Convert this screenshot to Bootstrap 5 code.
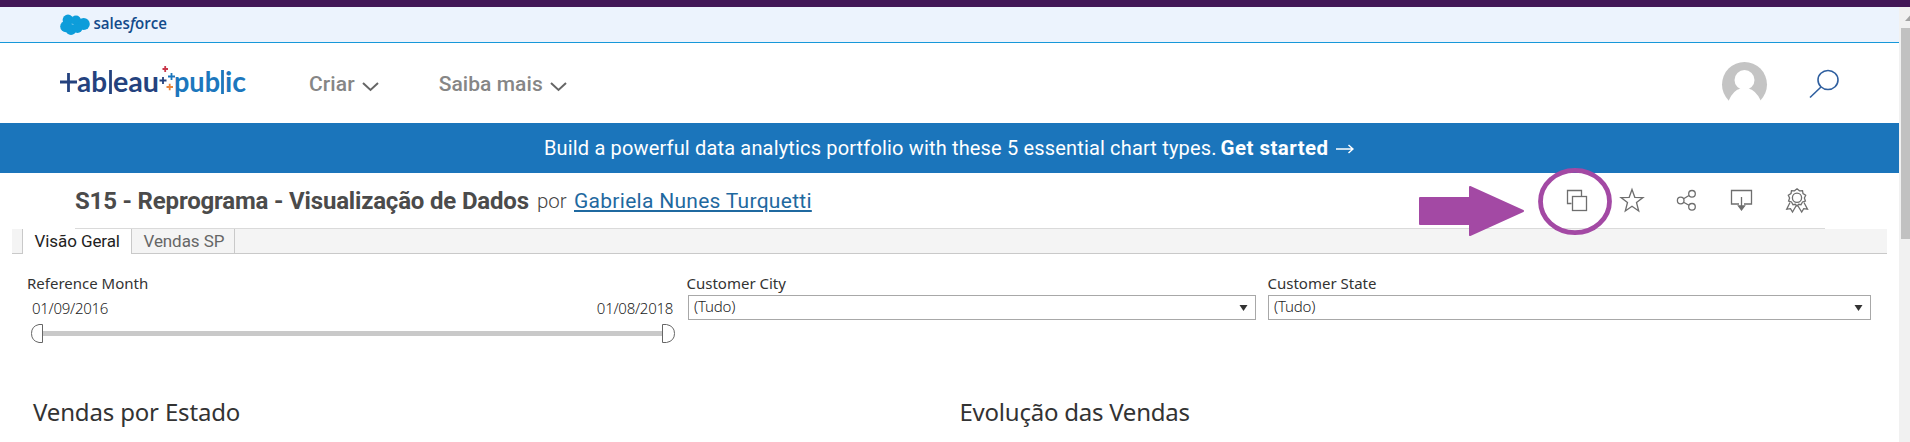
<!DOCTYPE html>
<html lang="pt">
<head>
<meta charset="utf-8">
<title>Tableau Public</title>
<link href="https://cdn.jsdelivr.net/npm/bootstrap@5.3.0/dist/css/bootstrap.min.css" rel="stylesheet">
<style>
body{height:442px;overflow:hidden;background:#fff;color:#333;font-family:"Noto Sans",sans-serif}
.benton{font-family:Roboto,"Liberation Sans",sans-serif}
.shell{height:442px}
.top-strip{height:7px;background:#421757}
.page-body{width:1899px}
.sf-bar{height:36px;background:#ecf3fd;border-bottom:1px solid #1798d9;padding-left:60px}
.site-head{height:80px;padding-left:60px}
.main-nav{margin-left:58px;padding-top:2px}
.main-nav svg{margin-left:6px;margin-top:5px}
.menu-item{color:#868686;font-size:21px;font-weight:500;line-height:30px;text-decoration:none;white-space:nowrap;letter-spacing:.1px}
.menu-item + svg + .menu-item{margin-left:60px;letter-spacing:.05px}
.promo{height:50px;background:#1b75bb;color:#fff;font-size:20px;line-height:51px;padding-left:544px;white-space:nowrap;letter-spacing:.16px}
.promo b{font-size:20.5px;letter-spacing:.45px;margin:0 6px 0 4px}
.title-row{height:55px;margin-left:75px;width:1750px;white-space:nowrap}
.title-row h1{font-size:24px;font-weight:700;color:#4b4b4b;line-height:56px;letter-spacing:-.18px;width:462px}
.by{font-size:20.5px;font-weight:300;line-height:57px;color:#444;width:37px}
.author{font-size:21px;color:#1f69a0;line-height:57px;text-decoration-thickness:2px;text-underline-offset:2px;letter-spacing:.28px}
.author:hover{color:#1f69a0}
.tool-icons{width:280px;height:55px}
.rule{height:1px;width:1750px;margin-left:75px;background:#dadada}
.sheet-tabs{height:25px;width:1875px;margin-left:12px;background:#f4f4f4;font-size:17px;line-height:25px;white-space:nowrap;letter-spacing:-.08px}
.gap-tab,.rest-tab{border-bottom:1px solid #c9c9c9}
.gap-tab{width:11px;border-right:1px solid #c9c9c9}
.tab-on{width:109px;background:#fff;padding-left:11.5px;border-right:1px solid #c9c9c9;color:#222}
.tab-off{width:103px;padding-left:11.5px;border-right:1px solid #c9c9c9;border-bottom:1px solid #c9c9c9;color:#666}
.filters{height:141px;padding-top:18px;padding-left:27px;white-space:nowrap}
.flabel{font-size:15px;line-height:23px;color:#333}
.range-filter{width:660px;padding-right:12px}
.dates{font-size:15px;font-weight:300;line-height:26px;color:#222;letter-spacing:-.28px;padding-left:5px;padding-right:2px}
.range{margin-left:4px;margin-top:3px}
.range-track{height:5px;background:#c9c9c9;margin-left:-1px}
.pick{height:25px;border:1px solid #a8a8a8;font-size:15px;font-weight:300;line-height:21px;padding-left:5px;padding-right:7px;color:#222;letter-spacing:-.2px}
.city{width:569px;margin-right:12px}
.city .flabel,.state .flabel{margin-left:-.5px}
.city .pick{margin-left:1px}
.state{width:603px}
.sheets{padding-left:33px}
.sheet-title{font-size:24px;line-height:34px;font-weight:400;color:#333;white-space:nowrap;letter-spacing:-.16px;margin:0}
.sheet-title.first{width:926.5px}
.sheet-title.first + .sheet-title{letter-spacing:-.24px}
.axis-ticks{padding-left:107px;height:4px;margin-top:4px}
.axis-ticks span{width:1px;background:#eee;margin-right:942px}
.scroller{width:11px;background:#f1f1f1;padding-left:2px}
.thumb{height:211px;background:#c1c1c1}
.marker{left:1415px;top:165px;pointer-events:none}
</style>
<script src="https://cdn.jsdelivr.net/npm/bootstrap@5.3.0/dist/js/bootstrap.bundle.min.js"></script>
</head>
<body>
<div class="shell position-relative d-flex flex-column">
<div class="top-strip flex-shrink-0"></div>
<div class="d-flex flex-grow-1">
<main class="page-body flex-shrink-0">
<div class="sf-bar">
<svg class="d-block" width="110" height="35" viewBox="60 7 110 35"><g fill="#0d9dda"><circle cx="68" cy="20" r="5.4"/><circle cx="66" cy="26.5" r="5.8"/><circle cx="76" cy="20.5" r="5"/><circle cx="83.700" cy="24" r="6.1"/><circle cx="71" cy="29.500" r="5.4"/><circle cx="77.500" cy="28" r="5"/></g>
<text x="93.5" y="29.3" font-family="Open Sans,sans-serif" font-size="16" font-weight="600" fill="#134a8a" textLength="73.5" lengthAdjust="spacingAndGlyphs">sales<tspan font-style="italic">f</tspan>orce</text></svg>
</div>
<header class="site-head d-flex">
<svg class="flex-shrink-0" width="191" height="80" viewBox="60 43 191 80">
<g font-family="Lato,sans-serif" font-size="28" font-weight="700"><g fill="#24427e"><text x="77" y="91.7" textLength="30" lengthAdjust="spacingAndGlyphs">ab</text><text x="113" y="91.7" textLength="46" lengthAdjust="spacingAndGlyphs">eau</text></g><g fill="#1c77bd"><text x="174" y="91.7" textLength="46" lengthAdjust="spacingAndGlyphs">pub</text><text x="225" y="91.7" textLength="21" lengthAdjust="spacingAndGlyphs">ic</text></g></g>
<g fill="none" stroke-width="2.8"><path d="M60 82H77M68.500 73V92" stroke="#24427e"/><path d="M110.500 70V94" stroke="#24427e"/><path d="M222.500 70V94" stroke="#1c77bd"/></g>
<g fill="none" stroke-width="1.8"><path d="M162.500 69H168M165.200 66V72" stroke="#c9374a"/><path d="M159.500 80.500H166.500M163 77V84" stroke="#24427e"/><path d="M168 76.500H175M171.500 73V80" stroke="#1c77bd"/><path d="M166.500 87H173M169.700 83.700V90.300" stroke="#e8833a"/></g>
</svg>
<nav class="main-nav benton d-flex align-items-center">
<a class="menu-item" href="#">Criar</a>
<svg width="18" height="12" viewBox="0 0 18 12"><path d="M2 2 9.500 9 17 2" fill="none" stroke="#666" stroke-width="2"/></svg>
<a class="menu-item" href="#">Saiba mais</a>
<svg width="18" height="12" viewBox="0 0 18 12"><path d="M2 2 9.500 9 17 2" fill="none" stroke="#666" stroke-width="2"/></svg>
</nav>
<svg class="ms-auto" width="179" height="80" viewBox="1720 43 179 80"><circle cx="1744.500" cy="84.500" r="22.500" fill="#c4c4c4"/><circle cx="1744.500" cy="80" r="10" fill="#fff"/><path d="M1720 101H1728.500Q1733 90 1741 88.500H1748Q1756 90 1761 101H1770V109H1720Z" fill="#fff"/><g fill="none" stroke="#2f5f9f" stroke-width="1.6"><ellipse cx="1828" cy="80" rx="10" ry="9.500"/><path d="M1821 87 1810 97.500"/></g></svg>
</header>
<div class="promo benton d-flex"><span>Build a powerful data analytics portfolio with these 5 essential chart types.</span><b>Get started</b><svg class="align-self-center" width="19" height="12" viewBox="0 0 19 12"><path d="M1 7H18M13.500 3 18 7 13.500 11" fill="none" stroke="#fff" stroke-width="1.5"/></svg></div>
<div class="title-row benton d-flex">
<h1 class="mb-0">S15 - Reprograma - Visualização de Dados</h1><div class="by">por</div><a class="author" href="#">Gabriela Nunes Turquetti</a>
<svg class="tool-icons ms-auto" viewBox="1545 173 280 55"><g fill="none" stroke="#6e6e6e" stroke-width="1.3">
<path d="M1571.500 203.500H1567.500V190.500H1581.500V196.500"/><rect x="1572.500" y="196.500" width="14" height="14"/>
<path d="M1632 189.500 1634.800 197.300 1643 197.500 1636.500 202.500 1638.700 211 1632 206.300 1625.300 211 1627.500 202.500 1621 197.500 1629.200 197.300Z"/>
<circle cx="1680.700" cy="200.500" r="3.300"/><circle cx="1692" cy="193.800" r="3.300"/><circle cx="1692" cy="206.800" r="3.300"/><path d="M1683.600 198.800 1689 195.500M1683.600 202.200 1689 205.300"/>
<path d="M1739 204H1731.500V190.500H1751.500V204H1744M1741.500 197V208"/><path d="M1738.500 206H1744.500L1741.500 210Z" fill="#6e6e6e"/>
<circle cx="1797" cy="197.800" r="4.600"/><path d="M1797 188.800 1799.500 190.800 1802.500 190.600 1803 193.500 1805.700 195.300 1804.400 198 1805.400 201 1802.500 202 1801 204.700 1798.700 204.300 1797 206 1795.300 204.300 1793 204.700 1791.500 202 1788.600 201 1789.600 198 1788.300 195.300 1791 193.500 1791.500 190.600 1794.500 190.800Z"/>
<path d="M1790 202.500 1786.700 209.200 1790.500 208.700 1792.500 212 1796.300 205.500M1804 202.500 1807.500 209.200 1803.700 208.700 1801.700 212 1797.700 205.500"/>
</g></svg>
</div>
<div class="rule"></div>
<div class="sheet-tabs benton d-flex"><div class="gap-tab"></div><div class="tab-on">Visão Geral</div><div class="tab-off">Vendas SP</div><div class="rest-tab flex-grow-1"></div></div>
<div class="filters d-flex">
<div class="range-filter"><div class="flabel">Reference Month</div><div class="dates d-flex justify-content-between"><span>01/09/2016</span><span>01/08/2018</span></div>
<div class="range d-flex align-items-center"><svg width="13" height="19" viewBox="0 0 13 19"><path d="M11.500 .5H8Q.5 2 .5 9.500T8 18.500H11.500Z" fill="#fff" stroke="#666"/></svg><div class="range-track flex-grow-1"></div><svg width="13" height="19" viewBox="0 0 13 19"><path d="M.5 .5H4.500Q12.500 2 12.500 9.500T4.500 18.500H.5Z" fill="#fff" stroke="#666"/></svg></div></div>
<div class="city"><div class="flabel">Customer City</div><div class="pick d-flex justify-content-between"><span>(Tudo)</span><svg class="align-self-center" width="9" height="6" viewBox="0 0 9 6"><path d="M.5 0H8.500L4.500 6Z" fill="#333"/></svg></div></div>
<div class="state"><div class="flabel">Customer State</div><div class="pick d-flex justify-content-between"><span>(Tudo)</span><svg class="align-self-center" width="9" height="6" viewBox="0 0 9 6"><path d="M.5 0H8.500L4.500 6Z" fill="#333"/></svg></div></div>
</div>
<div class="sheets d-flex"><h2 class="sheet-title first">Vendas por Estado</h2><h2 class="sheet-title">Evolução das Vendas</h2></div>
<div class="axis-ticks d-flex"><span></span><span></span></div>
</main>
<div class="scroller"><svg class="d-block" width="9" height="21" viewBox="0 0 9 21"><path d="M4 14 9 8.500V14Z" fill="#a3a3a3"/></svg><div class="thumb"></div></div>
</div>
<svg class="marker position-absolute" width="200" height="75" viewBox="1415 165 200 75"><path d="M1420 198H1470V187L1523 211 1470 235V224H1420Z" fill="#a349a4" stroke="#a349a4" stroke-width="2" stroke-linejoin="round"/><ellipse cx="1575" cy="201.500" rx="34.500" ry="31.200" fill="none" stroke="#a349a4" stroke-width="4.800"/></svg>
</div>
</body>
</html>
